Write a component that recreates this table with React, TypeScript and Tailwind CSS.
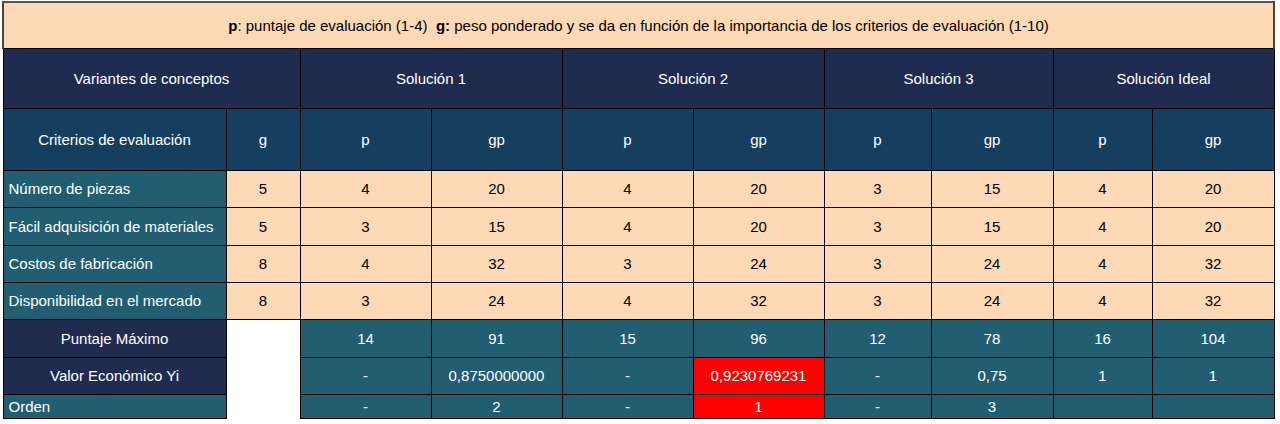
import React from "react";

const PEACH = "bg-[#fdd9b5]";
const cols = [223, 74, 131, 131, 131, 131, 107, 122, 99, 122];

const dataRows = [
  { label: "Número de piezas", g: "5", v: ["4", "20", "4", "20", "3", "15", "4", "20"] },
  { label: "Fácil adquisición de materiales", g: "5", v: ["3", "15", "4", "20", "3", "15", "4", "20"] },
  { label: "Costos de fabricación", g: "8", v: ["4", "32", "3", "24", "3", "24", "4", "32"] },
  { label: "Disponibilidad en el mercado", g: "8", v: ["3", "24", "4", "32", "3", "24", "4", "32"] },
];

const td = "border border-black text-center align-middle p-0";

export default function App() {
  return (
    <div className="w-[1280px] h-[424px] bg-white pl-[2px] pt-[1px]" style={{ fontFamily: '"Liberation Sans", Arial, sans-serif' }}>
      <table className="border-collapse table-fixed text-[15px] leading-none" style={{ width: 1273 }}>
        <colgroup>
          {cols.map((w, i) => (
            <col key={i} style={{ width: w }} />
          ))}
        </colgroup>
        <tbody>
          <tr className="h-[46px]">
            <td colSpan={10} className={`${td} ${PEACH} text-black border-l-2 border-l-[#444] border-r-2 border-r-[#444] border-t-2 border-t-[#555]`}>
              <b>p</b>: puntaje de evaluación (1-4)&nbsp;&nbsp;<b>g:</b> peso ponderado y se da en función de la importancia de los criterios de evaluación (1-10)
            </td>
          </tr>
          <tr className="h-[60px] bg-[#1f2b4f] text-white">
            <td colSpan={2} className={td}>Variantes de conceptos</td>
            <td colSpan={2} className={td}>Solución 1</td>
            <td colSpan={2} className={td}>Solución 2</td>
            <td colSpan={2} className={td}>Solución 3</td>
            <td colSpan={2} className={td}>Solución Ideal</td>
          </tr>
          <tr className="h-[62px] bg-[#163e5e] text-white">
            <td className={td}>Criterios de evaluación</td>
            <td className={td}>g</td>
            {["p", "gp", "p", "gp", "p", "gp", "p", "gp"].map((t, i) => (
              <td key={i} className={td}>{t}</td>
            ))}
          </tr>
          {dataRows.map((r, ri) => (
            <tr key={ri} className={ri === 1 ? "h-[38px]" : "h-[37px]"}>
              <td className={`${td} bg-[#215e71] text-white text-left pl-[5px]`}>{r.label}</td>
              <td className={`${td} ${PEACH} text-black`}>{r.g}</td>
              {r.v.map((v, i) => (
                <td key={i} className={`${td} ${PEACH} text-black`}>{v}</td>
              ))}
            </tr>
          ))}
          <tr className="h-[38px] text-white">
            <td className={`${td} bg-[#1f2b4f]`}>Puntaje Máximo</td>
            <td className="bg-white border-t border-black p-0"></td>
            {["14", "91", "15", "96", "12", "78", "16", "104"].map((v, i) => (
              <td key={i} className={`${td} bg-[#215e71]`}>{v}</td>
            ))}
          </tr>
          <tr className="h-[37px] text-white">
            <td className={`${td} bg-[#1f2b4f]`}>Valor Económico Yi</td>
            <td className="bg-white p-0"></td>
            {["-", "0,8750000000", "-", "0,9230769231", "-", "0,75", "1", "1"].map((v, i) => (
              <td key={i} className={`${td} ${i === 3 ? "bg-[#ff0000]" : "bg-[#215e71]"}`}>{v}</td>
            ))}
          </tr>
          <tr className="h-[24px] text-white">
            <td className={`${td} bg-[#215e71] text-left pl-[5px]`}>Orden</td>
            <td className="bg-white p-0"></td>
            {["-", "2", "-", "1", "-", "3", "", ""].map((v, i) => (
              <td key={i} className={`${td} ${i === 3 ? "bg-[#ff0000]" : "bg-[#215e71]"}`}>{v}</td>
            ))}
          </tr>
        </tbody>
      </table>
    </div>
  );
}
